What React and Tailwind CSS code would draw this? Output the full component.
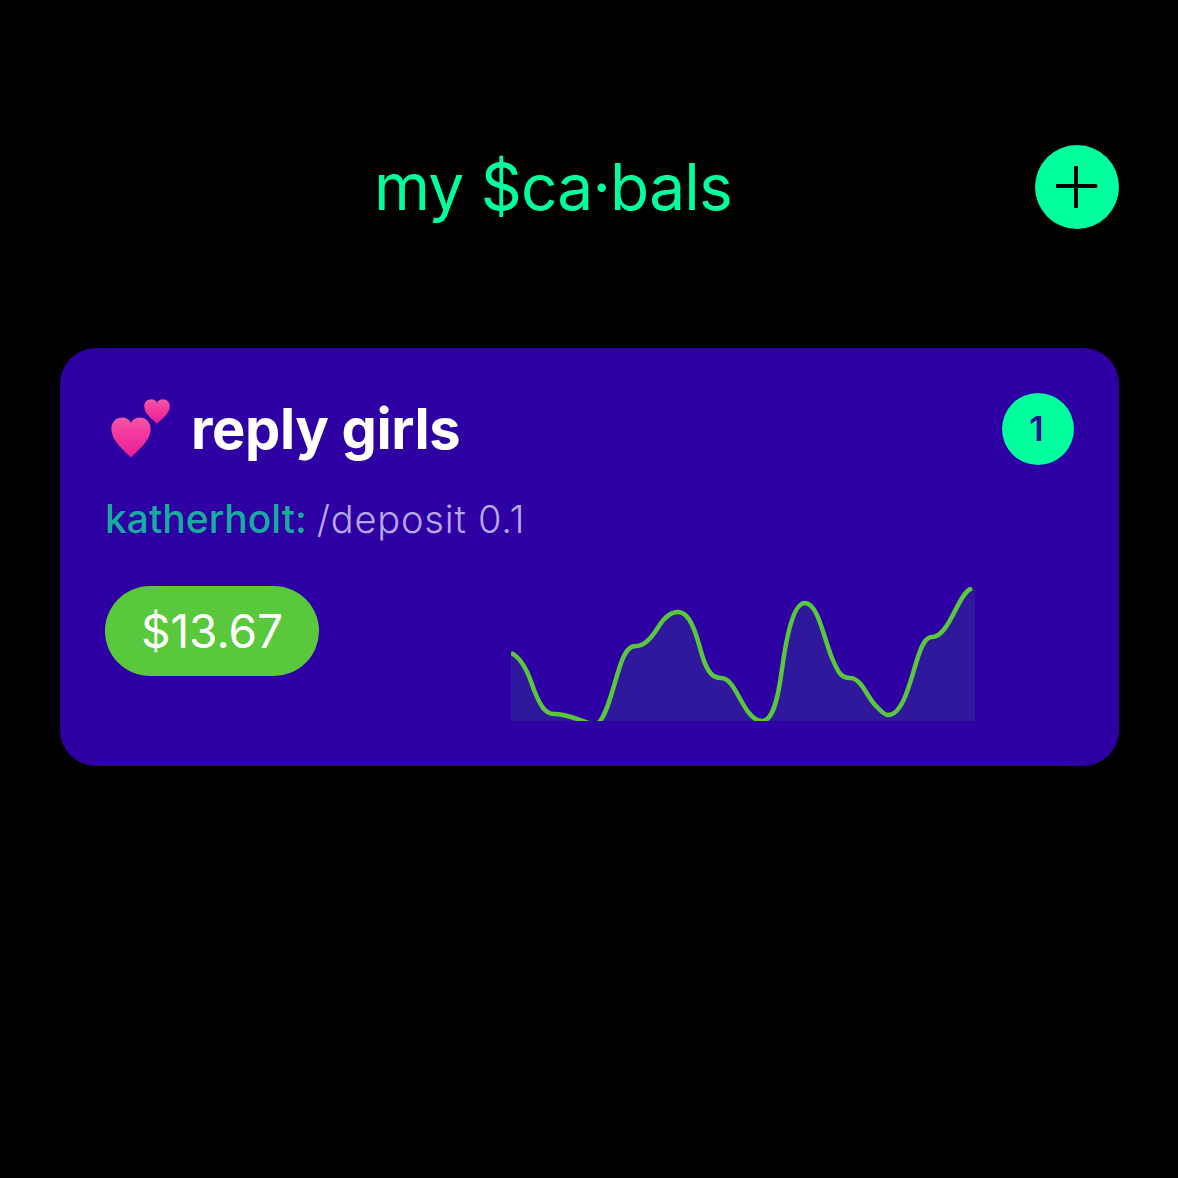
const line = "M0,66 C10,70 17,84 23,103 C29,118 34,127 43,127 C54,127 63,131 72,134 C80,137 84,139 89,134 C97,125 103,96 110,76 C114,65 118,59 125,59 C134,59 141,50 148,39 C153,31 160,25 167,25 C180,25 186,50 191,68 C196,84 201,91 210,91 C222,91 228,114 238,126 C242,131 246,134 251,134 C262,134 267,112 271,82 C276,46 283,16 294,16 C307,16 313,52 321,71 C327,85 330,91 339,91 C351,91 356,111 366,120 C370,124 373,128 377,128 C392,128 399,95 406,73 C410,60 414,50 421,50 C430,50 437,38 445,22 C450,12 455,3 461,1";
const heart = "M50 99 C34 82 2 60 1 30 C0 12 13 1 28 1 C38 1 46 6 50 14 C54 6 62 1 72 1 C87 1 100 12 99 30 C98 60 66 82 50 99 Z";

function Hearts() {
  return (
    <svg width="64" height="62" viewBox="0 0 64 62" className="shrink-0">
      <defs>
        <linearGradient id="hg" x1="0" y1="0" x2="0" y2="1">
          <stop offset="0" stopColor="#ee5aa6" />
          <stop offset="0.35" stopColor="#f63ca0" />
          <stop offset="1" stopColor="#e81e92" />
        </linearGradient>
      </defs>
      <svg x="37" y="1" width="26" height="25" viewBox="0 0 100 100" preserveAspectRatio="none"><path d={heart} fill="url(#hg)" /></svg>
      <svg x="4" y="19" width="40" height="41" viewBox="0 0 100 100" preserveAspectRatio="none"><path d={heart} fill="url(#hg)" /></svg>
    </svg>
  );
}

function Chart() {
  return (
    <svg width="464" height="134" viewBox="0 0 464 134" className="block overflow-hidden">
      <path d={`${line} L464,1 L464,134 L0,134 Z`} fill="#2f189c" />
      <path d={line} fill="none" stroke="#5ac83c" strokeWidth="4.5" />
    </svg>
  );
}

export default function App() {
  return (
    <div className="min-h-[1178px] bg-black font-['Inter',sans-serif]">
      <div className="flex items-center justify-between pt-[145px] pl-[374px] pr-[59px]">
        <h1 className="text-[64px] leading-[84px] font-normal tracking-[-0.8px] text-[#00ff9d]">my $ca·bals</h1>
        <button className="flex h-[84px] w-[84px] items-center justify-center rounded-full bg-[#00ff9d]">
          <svg width="42" height="42" viewBox="0 0 42 42" fill="none" stroke="#000" strokeWidth="4" strokeLinecap="round">
            <path d="M20 1.5v39M.5 20h39" />
          </svg>
        </button>
      </div>
      <div className="ml-[60px] mt-[119px] h-[418px] w-[1059px] rounded-[36px] bg-[#2e00a3] pt-[45px] pl-[45px] pr-[45px]">
        <div className="flex items-center justify-between">
          <div className="flex items-center gap-[20px] pl-[2px]">
            <Hearts />
            <span className="text-[56px] leading-[72px] font-bold tracking-[-0.4px] text-white">reply girls</span>
          </div>
          <div className="flex h-[72px] w-[72px] items-center justify-center rounded-full bg-[#00ff9d] pr-[3px] pb-[1px] text-[34px] font-semibold text-[#2a158f]">1</div>
        </div>
        <div className="mt-[29px] text-[39px] leading-[50px]">
          <span className="font-medium text-[#18ab9f]">katherholt:</span>{" "}
          <span className="ml-[-1px] text-[38px] font-light tracking-[0.8px] text-[#b8a8ee]">/deposit 0.1</span>
        </div>
        <div className="mt-[42px] flex items-start">
          <div className="flex h-[90px] w-[214px] items-center justify-center rounded-[45px] bg-[#5ac83c] text-[46px] text-white">$13.67</div>
          <div className="ml-[192px] mt-[1px]"><Chart /></div>
        </div>
      </div>
    </div>
  );
}
